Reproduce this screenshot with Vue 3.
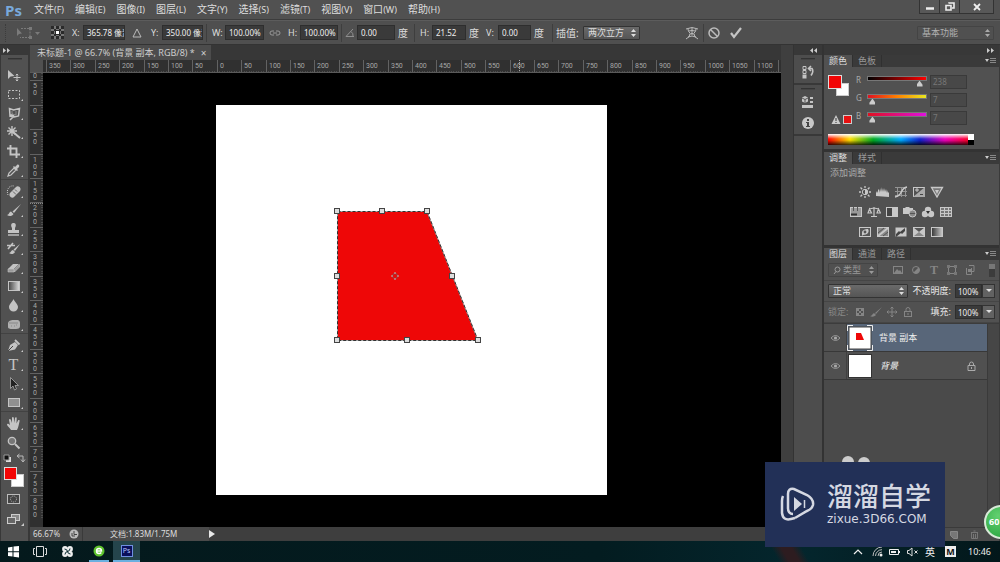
<script setup>
const menus = [
  ['文件', 'F'], ['编辑', 'E'], ['图像', 'I'], ['图层', 'L'], ['文字', 'Y'],
  ['选择', 'S'], ['滤镜', 'T'], ['视图', 'V'], ['窗口', 'W'], ['帮助', 'H'],
]

const STEP = 24.4
const hTicks = Array.from({ length: 31 }, (_, i) => ({
  x: Math.round(16 + i * STEP),
  label: i < 30 ? String(Math.abs(i * 50 - 350)) : '',
}))
const hMinor = Array.from({ length: 300 }, (_, i) => Math.round(16 + (i * STEP) / 10))
const vTicks = Array.from({ length: 19 }, (_, i) => {
  const y = Math.round(-17 + i * STEP)
  const digits = String(Math.abs(i * 50 - 100))
    .split('')
    .map((d, k) => ({ d, y: y + 8 + k * 7 }))
    .filter((t) => t.y > 4 && t.y < 454)
  return { y, digits }
})
const vMinor = Array.from({ length: 190 }, (_, i) => Math.round(-17 + (i * STEP) / 10))

const handles = [[294, 138], [339, 138], [384, 138], [294, 203], [409, 203], [294, 267], [364, 267], [435, 267]]

const S = 'fill="none" stroke="#c4c4c4"'
const F = 'fill="#c4c4c4"'
const toolGroups = [
  [
    { name: '移动工具', svg: `<path d="M2 2v9l2.500-2.500 4-.5z" ${F}/><path d="M11 6v7M7.500 9.500h7M9.800 7.300l1.200-1.300 1.200 1.300M9.800 11.700l1.200 1.300 1.200-1.300" ${S}/>` },
    { name: '矩形选框工具', more: 1, svg: `<rect x="2.500" y="3.500" width="11" height="8" ${S} stroke-dasharray="2 1.500"/>` },
    { name: '套索工具', more: 1, svg: `<path d="M4 10L3.500 2.500l4 1.500 6-1.500-1 7.500-4 1-2-2.500L4 10zM4 10l3 1-3 3" ${S} stroke-width="1.500"/><path d="M6 5v3l4 1V5" stroke="#888" fill="none"/>` },
    { name: '魔棒工具', more: 1, svg: `<path d="M6 1v10M1 6h10M2.500 2.500l7 7M9.500 2.500l-7 7" ${S} stroke-width="1.400"/><path d="M7 7l7 6" ${S} stroke-width="2"/>` },
    { name: '裁剪工具', more: 1, svg: `<path d="M4.500 1v9.500H14M1 4.500h9.500V14" ${S} stroke-width="1.900"/>` },
    { name: '吸管工具', more: 1, svg: `<path d="M2 13l1-3 5-5 2 2-5 5z" ${S} stroke-width="1.200"/><path d="M7 4l4 4 1-1-1-1 2-2c1-2-1-3-2-2L9 4 8 3z" ${F}/>` },
  ],
  [
    { name: '修复画笔', more: 1, svg: `<path d="M4 9l6-6c2-2 6 1 4 4l-6 6c-2 2-6-1-4-4z" ${F}/><path d="M7 7.500l3 3M9 5.500l2 2" stroke="#666" fill="none"/><path d="M2 11C0 6 3 1 8 2" ${S} stroke-dasharray="1 1"/>` },
    { name: '画笔', more: 1, svg: `<path d="M15 1L8 10 6.500 8.500z" ${F}/><path d="M1 12c2 0 2-3 4-3.500L7.500 11C6 13.500 3 13.500 1 12z" ${F}/>` },
    { name: '仿制图章', more: 1, svg: `<path d="M6 6C4 2 6 1 7.500 1S11 2 9 6v2h4v3H2V8h4z" ${F}/><path d="M2 13h11" ${S} stroke-width="1.400"/>` },
    { name: '历史记录画笔', more: 1, svg: `<path d="M14 3L9 10 7.500 8.500z" ${F}/><path d="M3 12c2 0 2-3 4-3L9 11c-1.500 2.500-4 2.500-6 1z" ${F}/><path d="M1 4.500h8M7 2l-5 6" ${S} stroke-width="1.600"/>` },
    { name: '橡皮擦', more: 1, svg: `<path d="M2 9l5-5h6l-5 5z" ${F}/><path d="M2 9h6v3H2zM8.500 9.500l5-5V7l-5 5z" fill="#999" stroke="#c4c4c4" stroke-width=".6"/>` },
    { name: '渐变', more: 1, svg: `<defs><linearGradient id="gt"><stop stop-color="#444"/><stop offset="1" stop-color="#ddd"/></linearGradient></defs><rect x="2.500" y="2.500" width="11" height="9" fill="url(#gt)" stroke="#c4c4c4"/>` },
    { name: '模糊', more: 1, svg: `<path d="M7.500 1c1 3 4.500 5 4.500 8a4.500 4.500 0 0 1-9 0c0-3 3.500-5 4.500-8z" ${F}/>` },
    { name: '海绵', more: 1, svg: `<path d="M2 6c1-3 4-3 6-3s6-1 6 3v3c0 3-3 3-6 3s-6 0-6-2z" fill="#b0b0b0"/><path d="M3 6h9" stroke="#888" fill="none"/><path d="M5 9h1M8 9h1M10 8h1" stroke="#888" fill="none"/>` },
  ],
  [
    { name: '钢笔', more: 1, svg: `<path d="M2 13l2-6 5-3 3 3-3 4.500z" ${F}/><path d="M9 2l4.500 4.500" ${S} stroke-width="1.800"/><path d="M2 13l5-5" stroke="#444" fill="none"/>` },
    { name: '文字', more: 1, svg: `<text x="7.500" y="12.500" text-anchor="middle" font-family="Liberation Serif, serif" font-size="16" ${F}>T</text>` },
    { name: '路径选择', more: 1, svg: `<path d="M4.500 1.500v11l2.500-2.500 1.500 4 2-1L9 9.500h3.500z" fill="#222" stroke="#aaa" stroke-width=".8"/>` },
    { name: '矩形', more: 1, svg: `<rect x="2.500" y="3.500" width="11" height="8" fill="#909090" stroke="#c4c4c4"/>` },
  ],
  [
    { name: '抓手', more: 1, svg: `<path d="M5 14c-1-2-4-4-4-5.500 0-1 1.500-1 3 .8L3 4c0-1.200 1.500-1.200 2 0L6 7V2c0-1.300 1.700-1.300 1.800 0L8.300 7l.7-5c.3-1.200 1.800-1 1.700.3L10.500 7.500l1.500-3c.6-1 1.900-.4 1.600.6-.7 3-1 6-2.600 8.900z" ${F}/>` },
    { name: '缩放', svg: `<circle cx="6" cy="6" r="3.700" fill="#777" stroke="#c4c4c4" stroke-width="1.300"/><path d="M9 9l4.500 4.500" ${S} stroke-width="2"/>` },
  ],
]

const A = 'fill="none" stroke="#c8c8c8"'
const B = 'fill="#c8c8c8"'
const adjust = [
  [
    ['亮度/对比度', `<circle cx="7" cy="6" r="2.700" ${A}/><path d="M7 3.300a2.700 2.700 0 0 1 0 5.400z" ${B}/><path d="M7 0v2M7 10v2M1 6h2M11 6h2M2.500 1.500l1.700 1.700M9.800 8.800l1.700 1.700M11.500 1.500L9.800 3.200M4.200 8.800l-1.700 1.700" ${A} stroke-width="1.300"/>`],
    ['色阶', `<path d="M0 10V7l1-2 1 2V4l1-1 1 4V2l1 4V1l1 5 1-4 1 4 1-4v4l1-3 1 4 1-3v3l1-1v5z" ${B}/>`],
    ['曲线', `<path d="M1 1.500h12M1 5.500h12M1 9.500h12M3.500 1v10M7.500 1v10M11.500 1v10" fill="none" stroke="#949494"/><path d="M1 11C9 10 6 2 13 1" ${A} stroke-width="1.600"/>`],
    ['曝光度', `<rect x="1.500" y="1.500" width="11" height="9" ${A}/><path d="M1 11L13 1v10z" fill="#aaa"/><path d="M3 4h4M5 2v4" ${A}/><path d="M8 8.500h3" stroke="#444"/>`],
    ['自然饱和度', `<path d="M1.500 1.500h11L7 11z" fill="#777" stroke="#c8c8c8" stroke-width="1.300"/><path d="M5 4h4L7 8z" ${B}/>`],
  ],
  [
    ['色相/饱和度', `<rect x="1.500" y="1.500" width="11" height="9" fill="#999" stroke="#c8c8c8"/><path d="M4.500 1v4M8.500 1v4" stroke="#555"/><path d="M2 8.500h6" stroke="#333" stroke-width="2"/>`],
    ['色彩平衡', `<path d="M7 1v9M4 10.500h6M2 3l5-1 5 1M2.500 3L1 7h3.500zM11.500 3L10 7h3.500z" ${A} stroke-width="1.200"/>`],
    ['黑白', `<rect x="1.500" y="1.500" width="11" height="9" fill="#444" stroke="#c8c8c8"/><path d="M7 2h5v8H7z" ${B}/>`],
    ['照片滤镜', `<path d="M0 2h2l1-1h3l1 1h3v6H0z" ${B}/><circle cx="9.500" cy="7.500" r="3.500" fill="#888" stroke="#c8c8c8"/><path d="M7 7.500h5" stroke="#555"/>`],
    ['通道混合器', `<circle cx="7" cy="4" r="3.200" ${B}/><circle cx="4" cy="8" r="3.200" ${B}/><circle cx="10" cy="8" r="3.200" ${B}/><path d="M5 5h4L7 8z" fill="#333"/>`],
    ['颜色查找', `<rect x="1.500" y="1.500" width="11" height="9" fill="#777" stroke="#c8c8c8"/><path d="M1 4.500h12M1 7.500h12M5.500 1v10M9.500 1v10" stroke="#c8c8c8"/>`],
  ],
  [
    ['反相', `<rect x="1.500" y="1.500" width="11" height="9" fill="#555" stroke="#c8c8c8"/><path d="M10 3c2 3-1 6-5 6L4 10l0-3c0-3 3-4 6-4z" ${B}/><circle cx="7" cy="6" r="1.400" fill="#555"/>`],
    ['色调分离', `<rect x="1.500" y="1.500" width="11" height="9" fill="#888" stroke="#c8c8c8"/><path d="M2 10l10-8" stroke="#c8c8c8" stroke-width="2"/><path d="M2 7l6-5M7 10l5-4" fill="none" stroke="#555"/>`],
    ['阈值', `<rect x="1.500" y="1.500" width="11" height="9" ${B}/><path d="M2 8l3-3 1 1 5-4v3L8 8 7 7l-5 4z" fill="#444"/>`],
    ['可选颜色', `<rect x="1.500" y="1.500" width="11" height="9" fill="#888" stroke="#c8c8c8"/><path d="M2 2l5 4 5-4z" fill="#555"/><path d="M2 2l5 4-5 4zM12 2L7 6l5 4z" ${B}/>`],
    ['渐变映射', `<defs><linearGradient id="gm"><stop stop-color="#333"/><stop offset="1" stop-color="#ccc"/></linearGradient></defs><rect x="1.500" y="1.500" width="11" height="9" fill="url(#gm)" stroke="#c8c8c8"/>`],
  ],
]

const channels = [
  { id: 'R', value: 238, cls: 'tr' },
  { id: 'G', value: 7, cls: 'tg' },
  { id: 'B', value: 7, cls: 'tb' },
]

const D = 'fill="none" stroke="#858585"'
const filters = [
  ['像素', `<rect x="1.500" y="2.500" width="9" height="7" ${D}/><path d="M2 9l3-4 2 2 1-1 2 3z" fill="#858585"/>`],
  ['调整', `<circle cx="6" cy="6" r="3.500" ${D}/><path d="M8.500 3.500a3.500 3.500 0 0 1-5 5z" fill="#858585"/>`],
  ['文字', `<text x="6" y="10" text-anchor="middle" font-family="Liberation Serif, serif" font-size="12" font-weight="bold" fill="#858585">T</text>`],
  ['形状', `<rect x="2.500" y="2.500" width="7" height="7" ${D}/><path d="M1 1h3v3H1zM8 1h3v3H8zM1 8h3v3H1zM8 8h3v3H8z" fill="#777"/>`],
  ['智能对象', `<path d="M2.500 4v6.500h5V4M5 1.500h5v6H8" ${D}/><rect x="4" y="5" width="3" height="3" fill="#858585"/>`],
]
const locks = [
  ['锁定透明像素', `<rect x="2.500" y="2.500" width="7" height="7" ${D}/><path d="M3 3h2v2H3zM7 3h2v2H7zM5 5h2v2H5zM3 7h2v2H3zM7 7h2v2H7z" fill="#858585"/>`],
  ['锁定图像像素', `<path d="M12 1L6 8 5 7zM0 10c2 0 2-2 4-3l2 2c-2 2-4 2-6 1z" fill="#858585"/>`],
  ['锁定位置', `<path d="M6 1v10M1 6h10M4.500 2.500L6 1l1.500 1.500M4.500 9.500L6 11l1.500-1.500M2.500 4.500L1 6l1.500 1.500M9.500 4.500L11 6 9.500 7.500" ${D}/>`],
  ['锁定全部', `<path d="M4 5V3.500a2 2 0 0 1 4 0V5" ${D}/><rect x="2.500" y="5.500" width="7" height="5" ${D}/><path d="M6 7v2" ${D}/>`],
]
</script>

<template>
  <div class="app">
    <header class="menubar">
      <strong class="logo">Ps</strong>
      <nav class="menus">
        <button v-for="m in menus" :key="m[1]" type="button">{{ m[0] }}<span>({{ m[1] }})</span></button>
      </nav>
      <div class="winbtns">
        <button type="button" aria-label="最小化"><svg width="20" height="13"><path d="M6 8.500h8" stroke="#eee" stroke-width="2.500" /></svg></button>
        <button type="button" aria-label="还原"><svg width="20" height="13"><path d="M9 3.500V3h5v5h-2M6 5.500h5v4.500H6z" fill="none" stroke="#eee" stroke-width="1.600" /></svg></button>
        <button type="button" class="wide" aria-label="关闭"><svg width="20" height="13"><path d="M7 4l6 6M13 4l-6 6" stroke="#eee" stroke-width="1.800" /></svg></button>
      </div>
    </header>

    <section class="options">
      <span class="grip"></span>
      <svg width="18" height="14"><path d="M1 2v8l2-2 3-.5z" fill="#7a7a7a" /><path d="M5 2.500h9v9H4" fill="none" stroke="#7a7a7a" stroke-dasharray="2 1" /><path d="M13 1h3v3h-3zM13 10h3v3h-3z" fill="#7a7a7a" /></svg>
      <svg width="14" height="14"><path d="M1 6h5L3.500 9z" fill="#7a7a7a" /></svg>
      <svg width="22" height="18">
        <g fill="#2a2a2a"><path d="M3 2h13v13H3z" fill="#777" /><path d="M3 2h3v3H3zM8 2h3v3H8zM13 2h3v3h-3zM3 7h3v3H3zM13 7h3v3h-3zM3 12h3v3H3zM8 12h3v3H8zM13 12h3v3h-3zM6 5h2v2H6zM11 5h2v2h-2zM6 10h2v2H6zM11 10h2v2h-2zM7 6h5v5H7z" /></g>
        <rect x="8" y="7" width="3" height="3" fill="#fff" />
      </svg>
      <label for="ox">X:</label><input id="ox" value="365.78 像素" />
      <svg class="mid" width="12" height="12"><path d="M6 2l4 8H2z" fill="none" stroke="#bbb" /></svg>
      <label for="oy">Y:</label><input id="oy" value="350.00 像素" />
      <span class="sep"></span>
      <label for="ow">W:</label><input id="ow" value="100.00%" />
      <svg class="mid" width="12" height="8"><path d="M5 2H3a2 2 0 0 0 0 4h2M7 2h2a2 2 0 0 1 0 4H7M4 4h4" fill="none" stroke="#999" /></svg>
      <label for="oh">H:</label><input id="oh" value="100.00%" />
      <span class="sep"></span>
      <svg width="12" height="12"><path d="M9 2L2 9.500h8M7 4.500a5 5 0 0 1 2 5" fill="none" stroke="#8f8f8f" /></svg>
      <input id="oa" aria-label="旋转" value="0.00" /><span class="unit">度</span>
      <span class="sep"></span>
      <label for="sh">H:</label><input id="sh" value="21.52" /><span class="unit">度</span>
      <label for="sv">V:</label><input id="sv" value="0.00" /><span class="unit">度</span>
      <span class="sep"></span>
      <label for="interp" class="cn">插值:</label>
      <span class="sel"><select id="interp"><option>两次立方</option></select><svg width="5" height="8"><path d="M0 3l2.500-3L5 3zM0 5l2.500 3L5 5z" fill="#ddd" /></svg></span>
      <span></span>
      <button type="button" aria-label="变形"><svg width="14" height="14"><path d="M1 3q6-3 12 0M3 3q0 3 2 4M11 3q0 3-2 4M4 5q3-1 6 0M4.500 8q2.500-1 5 0M7 2v7M5 8q0 3-4 5M9 8q0 3 4 5M3 11q4-2 8 0" fill="none" stroke="#bbb" /></svg></button>
      <span class="sep"></span>
      <button type="button" aria-label="取消"><svg width="14" height="14"><circle cx="7" cy="7" r="5" fill="none" stroke="#bbb" stroke-width="1.500" /><path d="M3.500 3.500l7 7" stroke="#bbb" stroke-width="1.500" /></svg></button>
      <span></span>
      <button type="button" aria-label="提交"><svg width="14" height="14"><path d="M2 7l3 4L12 2" fill="none" stroke="#c4c4c4" stroke-width="2.200" /></svg></button>
      <span></span>
      <span class="sel dim"><select aria-label="工作区"><option>基本功能</option></select><svg width="5" height="8"><path d="M0 3l2.500-3L5 3zM0 5l2.500 3L5 5z" fill="#aaa" /></svg></span>
    </section>

    <main class="work">
      <aside class="tools">
        <div class="dockhead left"><svg width="8" height="5"><path d="M0 0l3 2.500L0 5zM4 0l3 2.500L4 5z" fill="#ccc" /></svg></div>
        <div class="toolcol">
          <i class="handle"></i>
          <div v-for="(g, gi) in toolGroups" :key="gi" class="tgroup">
            <button v-for="t in g" :key="t.name" type="button" :aria-label="t.name">
              <svg width="15" height="15" v-html="t.svg"></svg><i v-if="t.more" class="more"></i>
            </button>
          </div>
          <svg class="swatches" width="24" height="80">
            <path d="M3 6h5v5H3z" fill="#ddd" /><path d="M1 4h5v5H1z" fill="#111" stroke="#999" />
            <path d="M15 5h5v5M16.500 3L14 5l2.500 2M18 8.500L20 11l2-2.500" fill="none" stroke="#bbb" />
            <rect x="8.500" y="23.500" width="12" height="12" fill="#fff" stroke="#ccc" />
            <rect x="1.500" y="16.500" width="12" height="12" fill="#f20505" stroke="#ddd" />
            <rect x="4.500" y="43.500" width="12" height="9" fill="#444" stroke="#bbb" /><circle cx="10.500" cy="48" r="3" fill="none" stroke="#bbb" stroke-dasharray="1 1" />
            <rect x="8.500" y="63.500" width="8" height="6" fill="#888" stroke="#ccc" /><rect x="4.500" y="66.500" width="8" height="6" fill="#666" stroke="#ccc" />
            <path d="M18 75h3v-3z" fill="#ccc" />
          </svg>
        </div>
      </aside>

      <section class="doc">
        <div class="tabs"><div class="tab"><span>未标题-1 @ 66.7% (背景 副本, RGB/8) *</span><button type="button" aria-label="关闭文档">×</button></div></div>
        <div class="ruler">
          <svg width="752" height="13">
            <rect width="13" height="13" fill="#505050" />
            <path v-for="(x, i) in hMinor" :key="'m' + i" :d="`M${x}.5 11v2`" stroke="#4c4c4c" />
            <g v-for="(t, i) in hTicks" :key="i"><path :d="`M${t.x}.5 0v13`" stroke="#626262" /><text :x="t.x + 3" y="8">{{ t.label }}</text></g>
            <path d="M489.500 0v13" stroke="#aaa" stroke-dasharray="1 1" />
          </svg>
        </div>
        <div class="view">
          <svg class="vruler" width="13" height="454">
            <path v-for="(y, i) in vMinor" :key="'m' + i" :d="`M11 ${y}.5h2`" stroke="#4c4c4c" />
            <g v-for="(t, i) in vTicks" :key="i">
              <path :d="`M0 ${t.y}.5h13`" stroke="#626262" />
              <text v-for="n in t.digits" :key="n.y" x="3" :y="n.y">{{ n.d }}</text>
            </g>
            <path d="M0 130.500h13" stroke="#888" stroke-dasharray="1 1" />
          </svg>
          <div class="canvas">
            <svg width="738" height="454">
              <rect x="173" y="32" width="391" height="390" fill="#fff" />
              <path d="M294 138H384L435 267H294z" fill="#ee0707" />
              <path d="M294.500 138.500H384L435 267.500H294.500z" fill="none" stroke="#aaa" />
              <path d="M294.500 138.500H384L435 267.500H294.500z" fill="none" stroke="#333" stroke-dasharray="3 2" />
              <rect v-for="(h, i) in handles" :key="i" :x="h[0] - 2.5" :y="h[1] - 2.5" width="5" height="5" fill="#ddd" stroke="#444" />
              <g fill="none" stroke="#8c4a4a"><circle cx="352" cy="203" r="2.500" /><path d="M348 203h2M354 203h2M352 199v2M352 205v2" stroke="#bbb" /></g>
            </svg>
          </div>
        </div>
        <footer class="status">
          <span class="zoom">66.67%</span>
          <span class="share"><svg width="10" height="10"><circle cx="5" cy="5" r="4.500" fill="#bbb" /><path d="M5 2v3.500h3M3 4v3h3" fill="none" stroke="#444" /></svg></span>
          <span class="info">文档:1.83M/1.75M</span>
          <svg width="6" height="8"><path d="M0 0l6 4-6 4z" fill="#e8e8e8" /></svg>
        </footer>
      </section>

      <div class="scroll"></div>

      <aside class="icondock">
        <div class="dockhead"><svg width="8" height="5"><path d="M3 0L0 2.500 3 5zM7 0L4 2.500 7 5z" fill="#ccc" /></svg></div>
        <div class="igroup">
          <i class="handle"></i>
          <button type="button" aria-label="历史记录"><svg width="14" height="14"><path d="M2 1.500h3v3H2zM2 5.500h3v3H2z" fill="none" stroke="#c4c4c4" /><path d="M1.500 9.500h4v4h-4z" fill="#c4c4c4" /><path d="M8 3.500h3q2 3-1 7M10 1L7.500 3.500 10 6" fill="none" stroke="#c4c4c4" stroke-width="1.600" /></svg></button>
        </div>
        <div class="igroup">
          <i class="handle"></i>
          <button type="button" aria-label="属性"><svg width="14" height="14"><path d="M4 1l3 1.500v4L4 8 1 6.500v-4z" fill="#c4c4c4" /><path d="M1 3l3 1.500L7 3M4 4.500V8" stroke="#555" fill="none" /><path d="M9 2h3v2H9zM9 6h3v2H9zM1 10h11v3H1z" fill="#c4c4c4" /></svg></button>
          <button type="button" aria-label="信息"><svg width="14" height="14"><circle cx="7" cy="7" r="6" fill="#c8c8c8" /><path d="M6 3h2v2H6zM5 6h3v4h1v1H5v-1h1V7H5z" fill="#444" /></svg></button>
        </div>
      </aside>

      <aside class="panels">
        <div class="dockhead"><svg width="8" height="5"><path d="M0 0l3 2.500L0 5zM4 0l3 2.500L4 5z" fill="#ccc" /></svg></div>

        <section class="panel">
          <div class="ptabs"><button type="button" class="on">颜色</button><button type="button">色板</button><svg width="11" height="6"><path d="M0 1h4L2 4z" fill="#ccc" /><path d="M5 .5h6M5 2.500h6M5 4.500h6" stroke="#888" /></svg></div>
          <div class="color">
            <svg class="pair" width="28" height="58">
              <rect x="8.500" y="12.500" width="12" height="12" fill="#fff" stroke="#ccc" /><rect x=".5" y="4.500" width="13" height="13" fill="#f20505" stroke="#ddd" />
              <path d="M8 44l4.500 9h-9z" fill="#ccc" /><path d="M8 47v3M8 51v1" stroke="#333" />
              <rect x="15.500" y="44.500" width="8" height="8" fill="#e81010" stroke="#ccc" />
            </svg>
            <div class="rows">
              <div v-for="c in channels" :key="c.id" class="crow">
                <label :for="'c' + c.id">{{ c.id }}</label>
                <input :id="'c' + c.id" type="range" min="0" max="255" :value="c.value" :class="c.cls" />
                <input class="num" :aria-label="c.id + ' 值'" :value="c.value" />
              </div>
            </div>
          </div>
          <div class="spectrum"><i></i></div>
        </section>

        <section class="panel">
          <div class="ptabs"><button type="button" class="on">调整</button><button type="button">样式</button><svg width="11" height="6"><path d="M0 1h4L2 4z" fill="#ccc" /><path d="M5 .5h6M5 2.500h6M5 4.500h6" stroke="#888" /></svg></div>
          <div class="adjust">
            <p>添加调整</p>
            <div v-for="(r, i) in adjust" :key="i" class="arow">
              <button v-for="a in r" :key="a[0]" type="button" :aria-label="a[0]"><svg width="14" height="12" v-html="a[1]"></svg></button>
            </div>
          </div>
        </section>

        <section class="panel layers">
          <div class="ptabs"><button type="button" class="on">图层</button><button type="button">通道</button><button type="button">路径</button><svg width="11" height="6"><path d="M0 1h4L2 4z" fill="#ccc" /><path d="M5 .5h6M5 2.500h6M5 4.500h6" stroke="#888" /></svg></div>
          <div class="lrow filter">
            <span class="sel kind"><svg class="mag" width="8" height="9"><circle cx="4.500" cy="3.500" r="2.500" fill="none" stroke="#999" /><path d="M3 5.500L1 8" stroke="#999" /></svg><select aria-label="过滤类型"><option>类型</option></select><svg width="5" height="8"><path d="M0 3l2.500-3L5 3zM0 5l2.500 3L5 5z" fill="#999" /></svg></span>
            <button v-for="f in filters" :key="f[0]" type="button" :aria-label="f[0]"><svg width="12" height="12" v-html="f[1]"></svg></button>
            <svg class="toggle" width="6" height="13"><rect width="6" height="13" fill="#3c3c3c" /><rect width="6" height="5" fill="#777" /></svg>
          </div>
          <div class="lrow">
            <span class="sel blend"><select aria-label="混合模式"><option>正常</option></select><svg width="5" height="8"><path d="M0 3l2.500-3L5 3zM0 5l2.500 3L5 5z" fill="#ddd" /></svg></span>
            <label for="opac">不透明度:</label><input id="opac" value="100%" /><button type="button" class="drop" aria-label="不透明度滑块"><svg width="6" height="4"><path d="M0 0h6L3 3z" fill="#ddd" /></svg></button>
          </div>
          <div class="lrow">
            <span class="locklabel">锁定:</span>
            <button v-for="l in locks" :key="l[0]" type="button" class="lock" :aria-label="l[0]"><svg width="12" height="12" v-html="l[1]"></svg></button>
            <label for="fill">填充:</label><input id="fill" value="100%" /><button type="button" class="drop" aria-label="填充滑块"><svg width="6" height="4"><path d="M0 0h6L3 3z" fill="#ddd" /></svg></button>
          </div>
          <div class="list">
            <ul>
              <li class="active">
                <button type="button" class="eye" aria-label="可见性"><svg width="11" height="8"><path d="M1 4q4.500-5 9 0-4.500 5-9 0z" fill="none" stroke="#999" /><circle cx="5.500" cy="4" r="1.600" fill="#aaa" /></svg></button>
                <svg class="thumb" width="26" height="26"><rect x="2" y="2" width="22" height="22" fill="#fff" stroke="#444" /><path d="M.5 6V.5H6M20 .5h5.500V6M25.500 20v5.500H20M6 25.500H.5V20" fill="none" stroke="#eee" /><path d="M9 8h5l3 7H9z" fill="#ee0707" /></svg>
                <span>背景 副本</span>
              </li>
              <li>
                <button type="button" class="eye" aria-label="可见性"><svg width="11" height="8"><path d="M1 4q4.500-5 9 0-4.500 5-9 0z" fill="none" stroke="#999" /><circle cx="5.500" cy="4" r="1.600" fill="#aaa" /></svg></button>
                <svg class="thumb" width="26" height="26"><rect x="1.500" y="1.500" width="23" height="23" fill="#fff" stroke="#333" /></svg>
                <em>背景</em>
                <svg class="locked" width="9" height="10"><path d="M2.500 4V3a2 2 0 0 1 4 0v1M1 4.500h7v5H1zM4.500 6v2" fill="none" stroke="#aaa" /></svg>
              </li>
            </ul>
            <div class="lscroll"></div>
          </div>
          <div class="lfoot">
            <svg width="8" height="8"><path d="M.5 .5h7v7h-4l-3-3z" fill="#777" stroke="#888" /></svg>
            <svg width="9" height="9"><path d="M1 2.500h7M3.500 1h2M1.500 3v5.500h6V3M3.500 4v4M5.500 4v4" fill="none" stroke="#777" /></svg>
          </div>
        </section>
      </aside>
    </main>

    <footer class="taskbar">
      <button type="button" aria-label="开始"><svg width="13" height="13"><path d="M1 2.500l4.500-.7v4.400H1zM6.500 1.600L12 1v5.200H6.500zM1 7.200h4.500v4.300L1 10.900zM6.500 7.200H12V12.500l-5.500-.8z" fill="#fff" /></svg></button>
      <button type="button" aria-label="任务视图"><svg width="16" height="13"><path d="M4.500 1.500h7v10h-7zM3 3.500H1.500v6H3M13 3.500h1.500v6H13" fill="none" stroke="#ddd" /></svg></button>
      <button type="button" aria-label="应用"><svg width="13" height="13"><g fill="#eee"><circle cx="4" cy="4" r="2.900" /><circle cx="9" cy="4" r="2.900" /><circle cx="4" cy="9" r="2.900" /><circle cx="9" cy="9" r="2.900" /></g><path d="M6.500 6.500Q6 4 3.500 4M6.500 6.500Q9 6 9 3.500M6.500 6.500Q7 9 9.500 9M6.500 6.500Q4 7 4 9.500" stroke="#06282e" fill="none" /></svg></button>
      <button type="button" class="run" aria-label="浏览器"><svg width="12" height="12"><circle cx="6" cy="6" r="5.500" fill="#5fc32e" /><path d="M3.500 6h5q0-2.500-2.500-2.500T3.500 6t2.500 2.500q1.500 0 2.300-1" fill="none" stroke="#fff" stroke-width="1.400" /></svg></button>
      <button type="button" class="run cur" aria-label="Photoshop"><span>Ps</span></button>
      <div class="tray">
        <svg width="10" height="8"><path d="M1 6l4-4 4 4" fill="none" stroke="#eee" stroke-width="1.200" /></svg>
        <svg width="11" height="11"><path d="M1 10A9 9 0 0 1 10 1M3.500 10A6.500 6.500 0 0 1 10 3.700M6 10a4 4 0 0 1 4-4" fill="none" stroke="#bbb" /><circle cx="9" cy="9" r="1.500" fill="#eee" /></svg>
        <svg width="12" height="8"><path d="M.5 1.500h9v5h-9zM10.500 3v2" fill="none" stroke="#eee" /><path d="M2 3h5v2H2z" fill="#eee" /></svg>
        <svg width="12" height="10"><path d="M.5 3.500H2L5 1v8L2 6.500H.5zM7.500 3.500l3 3M10.500 3.500l-3 3" fill="none" stroke="#ddd" /></svg>
        <span class="ime">英</span>
        <b>M</b>
        <time>10:46</time>
      </div>
    </footer>

    <svg class="blobs" width="36" height="12"><circle cx="8" cy="7" r="6" fill="#ccc" /><circle cx="24" cy="8" r="6" fill="#ccc" /></svg>
    <div class="mark">
      <svg width="38" height="40"><path d="M4 11q-1 2-1 5v12q1 8 9 6l4-1" fill="none" stroke="#d5d8e2" stroke-width="2.500" /><path d="M14 29q-5 0-5-6V9q0-6 6-5l13 6q7 4 6 10-1 4-6 6l-12 7" fill="none" stroke="#d5d8e2" stroke-width="2.500" /><path d="M15 12l8 7-8 7z" fill="#d5d8e2" /><path d="M25.500 15v8" stroke="#d5d8e2" stroke-width="1.500" /></svg>
      <div><strong>溜溜自学</strong><small>zixue.3D66.COM</small></div>
    </div>
    <div class="ball">60</div>
  </div>
</template>

<style>
body { background: #535353; overflow: hidden; }
</style>

<style scoped>
.app { position: relative; display: flex; flex-direction: column; height: 100vh; overflow: hidden; background: #535353; color: #ddd; font: 9px/12px "Noto Sans", "Noto Sans CJK SC", sans-serif; }
.app *, .app *::before { box-sizing: border-box; }
button { margin: 0; padding: 0; border: 0; background: none; color: inherit; font: inherit; }
input, select { font: inherit; color: inherit; margin: 0; }
svg { display: block; flex: none; }
i { display: block; }

.menubar { display: flex; align-items: center; height: 20px; flex: none; padding-left: 5px; border-bottom: 1px solid #3c3c3c; background: #515151; }
.logo { width: 29px; color: #78a9dc; font: bold 15px/16px "Open Sans", sans-serif; }
.menus { display: flex; gap: 11px; flex: 1; }
.menus button { font-size: 10px; line-height: 16px; white-space: nowrap; }
.menus span { font-size: 9px; }
.winbtns { display: flex; align-self: flex-start; margin-right: 6px; border: 1px solid #333; border-top: 0; }
.winbtns button { display: grid; place-items: center; width: 20px; height: 13px; background: #585858; border-right: 1px solid #333; }
.winbtns .wide { width: 33px; border-right: 0; }

.options { display: grid; align-items: center; height: 25px; flex: none; padding-right: 6px; background: #4f4f4f; border-bottom: 1px solid #333; border-top: 1px solid #5c5c5c;
  grid-template-columns: 16px 18px 14px 22px 13px 42px 24px 13px 41px 7px 15px 39px 22px 14px 38px 6px 13px 38px 15px 8px 14px 34px 18px 14px 33px 18px 6px 28px 57px 44px 16px 6px 16px 6px 16px 1fr 77px; }
.options label { padding-left: 2px; }
.options label.cn { padding-left: 1px; font-size: 10px; white-space: nowrap; }
.options input { width: 100%; height: 15px; padding: 0 0 0 3px; border: 1px solid #2e2e2e; background: #3a3a3a; color: #eee; font-size: 8px; }
.options button svg { margin: auto; }
.unit { padding-left: 3px; font-size: 10px; }
.mid { justify-self: center; }
.grip { width: 2px; height: 18px; margin-left: 5px; border-left: 1px dotted #3c3c3c; }
.sep { width: 1px; height: 18px; margin: auto; background: #3e3e3e; }
.sel { position: relative; display: flex; align-items: center; height: 14px; border: 1px solid #333; background: linear-gradient(#6a6a6a, #555); border-radius: 1px; }
.sel select { width: 100%; height: 12px; padding: 0 10px 0 4px; border: 0; background: none; appearance: none; line-height: 12px; }
.sel svg { position: absolute; right: 3px; pointer-events: none; }
.sel svg.mag { left: 4px; right: auto; }
.dim { color: #b0b0b0; background: #505050; border-color: #444; }

.work { display: flex; flex: 1; min-height: 0; }
.dockhead { display: flex; align-items: center; justify-content: flex-end; height: 10px; flex: none; padding-right: 4px; background: #383838; }
.dockhead.left { justify-content: flex-start; padding-left: 3px; }
.handle { width: 14px; height: 2px; margin: 3px auto 0; border-top: 1px solid #333; border-bottom: 1px solid #444; flex: none; }
.tools { display: flex; flex-direction: column; width: 30px; flex: none; background: #383838; }
.toolcol { display: flex; flex-direction: column; flex: 1; margin: 0 2px 0 1px; background: #515151; }
.toolcol .handle { margin-bottom: 5px; }
.tgroup { display: flex; flex-direction: column; }
.tgroup + .tgroup { border-top: 1px solid #424242; padding-top: 1px; }
.tgroup button { position: relative; height: 19px; padding: 2px 0 0 5px; }
.more { position: absolute; right: 5px; bottom: 2px; border: 1px solid; border-color: transparent #ccc #ccc transparent; }
.swatches { margin-left: 2px; }

.doc { display: flex; flex-direction: column; flex: 1; min-width: 0; }
.tabs { display: flex; height: 15px; flex: none; background: #373737; }
.tab { display: flex; align-items: center; padding: 0 4px 0 7px; gap: 6px; background: #4c4c4c; color: #ccc; white-space: nowrap; }
.tab button { font-size: 10px; }
.ruler { height: 13px; flex: none; overflow: hidden; background: #303030; border-bottom: 1px solid #5a5a5a; }
.ruler text, .vruler text { fill: #a6a6a6; font: 7px "Roboto", sans-serif; }
.view { display: flex; flex: 1; min-height: 0; }
.vruler { background: #303030; }
.canvas { flex: 1; min-width: 0; overflow: hidden; background: #000; }
.status { display: flex; align-items: center; height: 14px; flex: none; background: #3e3e3e; }
.status > * { display: flex; align-items: center; height: 14px; background: #4a4a4a; }
.status > svg { height: 8px; background: none; }
.zoom { width: 39px; padding-left: 3px; font-size: 8px; }
.share { width: 14px; border-right: 1px solid #3a3a3a; }
.info { width: 126px; padding-left: 27px; font-size: 8px; white-space: nowrap; }
.scroll { width: 12px; flex: none; background: #3f3f3f; }

.icondock { width: 31px; flex: none; background: #4d4d4d; border-left: 1px solid #333; border-right: 2px solid #333; }
.igroup { display: flex; flex-direction: column; align-items: center; padding-bottom: 4px; border-bottom: 2px solid #383838; }
.igroup button { margin-top: 3px; height: 15px; }
.igroup .handle { margin-bottom: 1px; }
.igroup button + button { margin-top: 6px; }

.panels { display: flex; flex-direction: column; width: 176px; flex: none; border-right: 1px solid #3a3a3a; }
.panel { background: #515151; border-bottom: 3px solid #333; }
.ptabs { display: flex; align-items: center; height: 12px; flex: none; background: #3a3a3a; color: #999; padding-right: 3px; }
.ptabs button { height: 12px; padding: 0 5px; border-right: 1px solid #303030; }
.ptabs button.on { background: #515151; color: #ddd; }
.ptabs > svg { margin-left: auto; }
.color { display: flex; padding: 4px 0 0 4px; height: 66px; }
.rows { display: flex; flex-direction: column; gap: 3px; padding-top: 3px; }
.crow { display: flex; align-items: center; height: 15px; color: #aaa; }
.crow label { width: 11px; font-size: 8px; line-height: 11px; align-self: flex-start; }
.crow input[type="range"] { width: 60px; height: 14px; appearance: none; background: none; }
.crow input[type="range"]::-webkit-slider-runnable-track { height: 5px; margin-bottom: 7px; border: 1px solid #777; }
.tr::-webkit-slider-runnable-track { background: linear-gradient(90deg, #000, #f00); }
.tg::-webkit-slider-runnable-track { background: linear-gradient(90deg, #e01020, #ff8000, #e8e820); }
.tb::-webkit-slider-runnable-track { background: linear-gradient(90deg, #e01020, #e010e0); }
.crow input[type="range"]::-webkit-slider-thumb { appearance: none; width: 6px; height: 6px; margin-top: 4px; background: #ccc; clip-path: polygon(50% 0, 100% 70%, 100% 100%, 0 100%, 0 70%); }
.num { width: 37px; height: 14px; margin-left: 3px; padding: 0 2px; border: 1px solid #3a3a3a; background: #484848; color: #777; font-size: 8px; }
.spectrum { display: flex; justify-content: flex-end; width: 146px; height: 11px; margin: 1px 0 4px 4px; background: linear-gradient(#fff, transparent 45%, transparent 55%, #000c), linear-gradient(90deg, #f00, #ffe000 15%, #0a2 31%, #0af 50%, #12c 63%, #e0b 80%, #f03 95%); }
.spectrum i { width: 6px; background: linear-gradient(#fff 50%, #000 50%); }

.adjust { height: 81px; padding: 2px 28px 0 6px; color: #aaa; }
.adjust p { margin: 0 0 6px; line-height: 14px; }
.arow { display: flex; justify-content: center; gap: 4px; height: 20px; }
.arow button { height: 12px; }

.layers { display: flex; flex-direction: column; flex: 1; min-height: 0; border-bottom: 0; }
.lrow { display: flex; align-items: center; height: 21px; flex: none; padding: 0 4px; border-bottom: 1px solid #454545; }
.lrow label { margin-left: auto; padding-right: 4px; color: #e8e8e8; white-space: nowrap; }
.lrow input { width: 27px; height: 14px; padding: 0 0 0 2px; border: 1px solid #2e2e2e; background: #3a3a3a; color: #eee; font-size: 8px; }
.kind { width: 50px; background: #505050; color: #999; border-color: #444; margin-right: 11px; }
.kind select { padding-left: 14px; }
.filter button { width: 18px; }
.filter button svg { margin: auto; }
.toggle { margin-left: auto; }
.blend { width: 80px; }
.drop { display: grid; place-items: center; width: 13px; height: 14px; border: 1px solid #333; background: #626262; }
.locklabel { width: 24px; color: #888; white-space: nowrap; }
.lock { width: 16px; }
.lock svg { margin: auto; }
.list { display: flex; flex: 1; min-height: 0; background: #4a4a4a; border-top: 1px solid #3c3c3c; }
ul { flex: 1; margin: 0; padding: 0; list-style: none; }
li { display: flex; align-items: center; height: 28px; border-bottom: 1px solid #383838; background: #505050; color: #eee; }
li.active { background: linear-gradient(90deg, #505050 22px, #586679 22px); }
.eye { width: 23px; height: 27px; display: grid; place-items: center; border-right: 1px solid #404040; }
.thumb { margin-right: 6px; }
em { padding-left: 1px; }
.locked { margin-left: auto; margin-right: 11px; }
.lscroll { width: 12px; background: #464646; border-left: 1px solid #3a3a3a; }
.lfoot { display: flex; align-items: center; justify-content: flex-end; gap: 12px; height: 14px; flex: none; padding-right: 20px; background: #4c4c4c; border-top: 1px solid #3a3a3a; }

.taskbar { display: flex; align-items: center; height: 21px; flex: none; padding-left: 6px; background: linear-gradient(60deg, transparent 0, transparent 77%, #2d1c20 78%, #2d1c20 79%, transparent 80%), linear-gradient(90deg, #04191c, #031c20 60%, #04262d 80%, #03171a); }
.taskbar > button { display: grid; place-items: center; width: 14px; height: 21px; margin-right: 12px; }
.taskbar > button:nth-child(2) { width: 16px; margin-right: 12px; }
.taskbar > button.run { width: 20px; margin: 0 4px 0 3px; border-bottom: 2px solid #6ab0e0; }
.taskbar > button.cur { width: 27px; margin: 0; background: #25454c; }
.cur span { width: 12px; height: 12px; border: 1px solid #6f8fe0; background: #0a0f5c; color: #b8c8ff; font-size: 7px; line-height: 10px; text-align: center; }
.tray { display: flex; align-items: center; gap: 6px; margin-left: auto; padding-right: 9px; color: #eee; font-size: 9px; }
.tray > svg:first-child { margin-right: 3px; }
.ime { margin: 0 4px 0 0; font-size: 10px; }
.tray b { width: 11px; height: 11px; background: #eee; color: #111; line-height: 11px; text-align: center; }
.tray time { margin-left: 6px; font-size: 9px; }

.blobs { position: absolute; right: 124px; bottom: 95px; }
.mark { position: absolute; right: 55px; bottom: 15px; display: flex; align-items: center; gap: 10px; width: 180px; height: 85px; padding-left: 14px; background: #223057; color: #d5d8e2; }
.mark strong, .mark small { display: block; white-space: nowrap; }
.mark strong { font: 500 26px/36px "Noto Sans CJK SC", sans-serif; }
.mark small { font: 12px/12px "DejaVu Sans", sans-serif; }
.mark div { padding-bottom: 8px; }
.ball { position: absolute; right: -18px; bottom: 23px; width: 34px; height: 34px; padding-left: 3px; border: 2px solid #d8ead8; border-radius: 50%; background: radial-gradient(circle at 40% 30%, #63d070, #22a03a); color: #fff; font: bold 9px/30px "Open Sans", sans-serif; }
</style>
